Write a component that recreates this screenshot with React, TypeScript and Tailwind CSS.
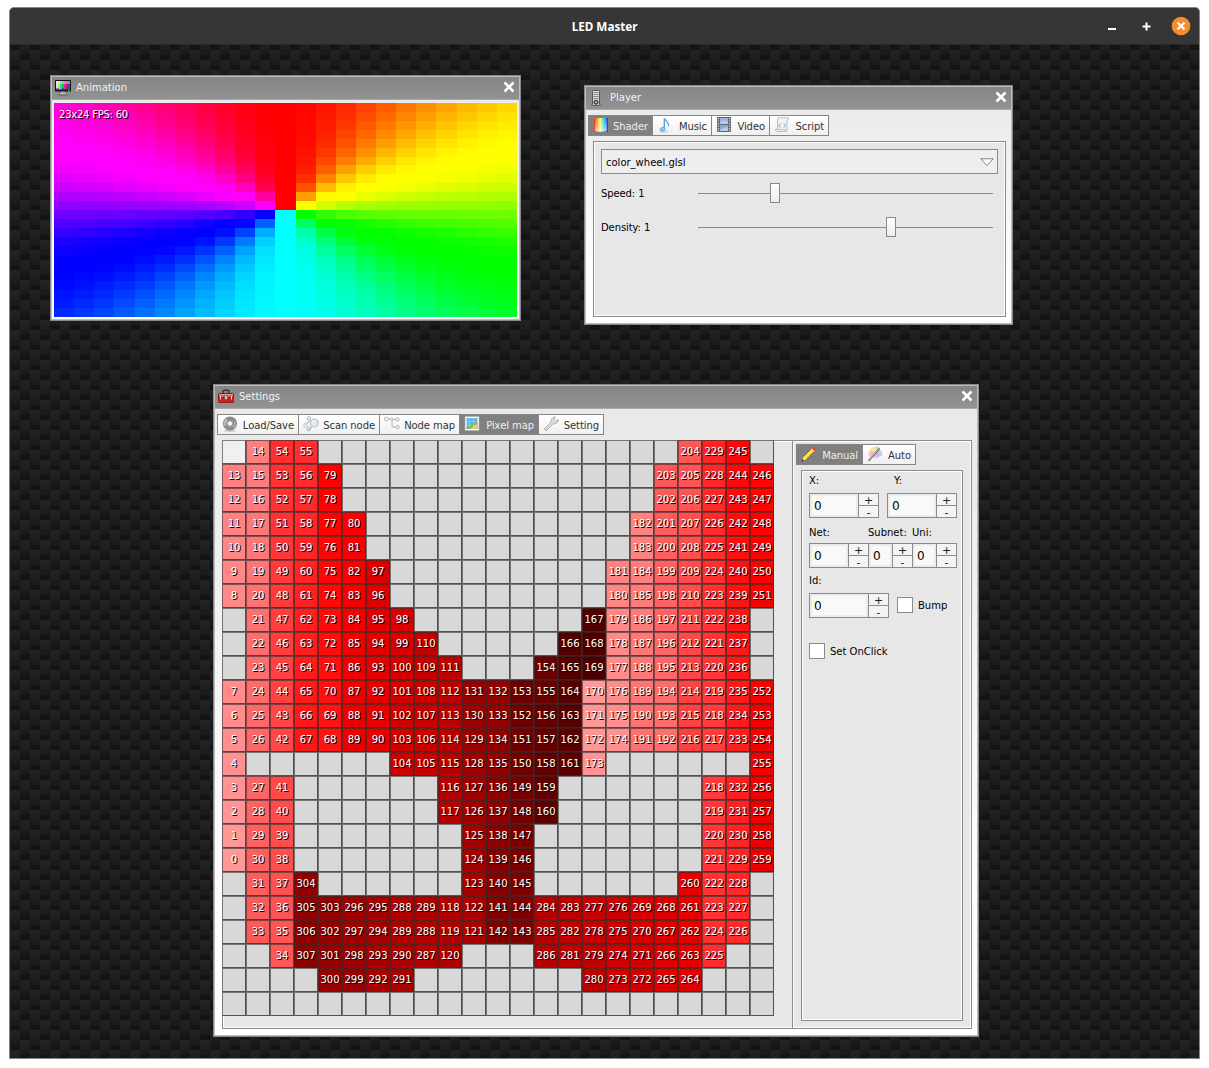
import React from "react";

const FONT = "font-['DejaVu_Sans',sans-serif]";

/* ---------- pixel map data ---------- */
const ROWS = [
  "-,14,54,55,,,,,,,,,,,,,,,,204,229,245,",
  "13,15,53,56,79,,,,,,,,,,,,,,203,205,228,244,246",
  "12,16,52,57,78,,,,,,,,,,,,,,202,206,227,243,247",
  "11,17,51,58,77,80,,,,,,,,,,,,182,201,207,226,242,248",
  "10,18,50,59,76,81,,,,,,,,,,,,183,200,208,225,241,249",
  "9,19,49,60,75,82,97,,,,,,,,,,181,184,199,209,224,240,250",
  "8,20,48,61,74,83,96,,,,,,,,,,180,185,198,210,223,239,251",
  ",21,47,62,73,84,95,98,,,,,,,,167,179,186,197,211,222,238,",
  ",22,46,63,72,85,94,99,110,,,,,,166,168,178,187,196,212,221,237,",
  ",23,45,64,71,86,93,100,109,111,,,,154,165,169,177,188,195,213,220,236,",
  "7,24,44,65,70,87,92,101,108,112,131,132,153,155,164,170,176,189,194,214,219,235,252",
  "6,25,43,66,69,88,91,102,107,113,130,133,152,156,163,171,175,190,193,215,218,234,253",
  "5,26,42,67,68,89,90,103,106,114,129,134,151,157,162,172,174,191,192,216,217,233,254",
  "4,,,,,,,104,105,115,128,135,150,158,161,173,,,,,,,255",
  "3,27,41,,,,,,,116,127,136,149,159,,,,,,,218,232,256",
  "2,28,40,,,,,,,117,126,137,148,160,,,,,,,219,231,257",
  "1,29,39,,,,,,,,125,138,147,,,,,,,,220,230,258",
  "0,30,38,,,,,,,,124,139,146,,,,,,,,221,229,259",
  ",31,37,304,,,,,,,123,140,145,,,,,,,260,222,228,",
  ",32,36,305,303,296,295,288,289,118,122,141,144,284,283,277,276,269,268,261,223,227,",
  ",33,35,306,302,297,294,289,288,119,121,142,143,285,282,278,275,270,267,262,224,226,",
  ",,34,307,301,298,293,290,287,120,,,,286,281,279,274,271,266,263,225,,",
  ",,,,300,299,292,291,,,,,,,,280,273,272,265,264,,,",
  ",,,,,,,,,,,,,,,,,,,,,,",
].map((r) => r.split(","));

const cellColor = (v: string) => {
  if (v === "") return "#d8d8d8";
  if (v === "-") return "#f0f0f0";
  return `hsl(0 100% ${80 - ((Number(v) % 170) * 65) / 169}%)`;
};

/* smooth HSV wheel, 23 x 24 */
const wheelColor = (c: number, r: number) => {
  const x = (c + 0.5) / 23 - 0.5;
  const y = 0.5 - (r + 0.5) / 24;
  const h = ((Math.atan2(x, y) / (2 * Math.PI)) * 6 + 6) % 6;
  const ch = [0, 4, 2].map((o) => {
    const t = Math.min(1, Math.max(0, Math.abs(((h + o) % 6) - 3) - 1));
    return Math.round(255 * t * t * (3 - 2 * t));
  });
  return `rgb(${ch.join(",")})`;
};

/* ---------- icons ---------- */
const Svg = ({ children }: { children: React.ReactNode }) => (
  <svg width="16" height="16" viewBox="0 0 16 16" className="block shrink-0">{children}</svg>
);

const TvIcon = () => (
  <Svg>
    <ellipse cx="8" cy="15" rx="6" ry="1" fill="#666" opacity=".6" />
    <rect x="6" y="10" width="4" height="4" fill="#ccc" />
    <rect x="4.5" y="12.8" width="7" height="1.8" rx=".6" fill="#ddd" stroke="#555" strokeWidth=".6" />
    <rect x="0" y="0" width="16" height="11.500" rx="1" fill="#111" />
    <rect x="1" y="1" width="2.2" height="8.500" fill="#ddd" />
    <rect x="3" y="1" width="2" height="8.500" fill="#e8e020" />
    <rect x="5" y="1" width="2" height="8.500" fill="#18d0d8" />
    <rect x="7" y="1" width="2" height="8.500" fill="#20c828" />
    <rect x="9" y="1" width="2" height="8.500" fill="#e018d8" />
    <rect x="11" y="1" width="2" height="8.500" fill="#d81828" />
    <rect x="13" y="1" width="2" height="8.500" fill="#2848d8" />
    <path d="M1 1h14v3H1z" fill="#fff" opacity=".4" />
    <path d="M1 8.500h3v1H1zM7 8.500h2v1H7z" fill="#2020c0" />
    <rect x="13" y="9.8" width="1.5" height="1.2" fill="#2f4" />
  </Svg>
);
const RemoteIcon = () => (
  <Svg>
    <ellipse cx="7" cy="15" rx="6" ry="1" fill="#666" opacity=".5" />
    <rect x="3.5" y=".5" width="7" height="15" rx=".8" fill="#deded8" stroke="#555" />
    {[2, 4, 6, 8].map((y) =>
      [4.700, 6.500, 8.300].map((x) => <rect key={`${x}-${y}`} x={x} y={y} width="1" height="1" fill={x > 8 && y < 3 ? "#e33" : "#444"} />),
    )}
    <circle cx="7" cy="12.200" r="2.500" fill="#444" />
    <circle cx="7" cy="12.200" r="1" fill="#ccc" />
  </Svg>
);
const ToolboxIcon = () => (
  <Svg>
    <path d="M5 5V2.700Q5 1.200 6.500 1.200h3Q11 1.200 11 2.700V5" fill="none" stroke="#333" strokeWidth="1.500" />
    <rect x=".5" y="4.500" width="15" height="5" rx=".8" fill="#ee5a5a" stroke="#8c1010" />
    <rect x=".5" y="8.500" width="15" height="5" rx=".5" fill="#cc1f1f" stroke="#8c1010" strokeWidth=".8" />
    <path d="M1 5.500h14" stroke="#f89a9a" />
    <path d="M2.500 7v3.500M13.500 7v3.500" stroke="#eee" strokeWidth=".9" />
    <rect x="6.8" y="6.500" width="2.4" height="4" fill="#ddd" stroke="#555" strokeWidth=".7" />
  </Svg>
);
const ShaderIcon = () => (
  <Svg>
    <defs>
      <linearGradient id="rainbow">
        <stop offset="0" stopColor="#f83018" />
        <stop offset=".25" stopColor="#ffa030" />
        <stop offset=".45" stopColor="#f8f880" />
        <stop offset=".62" stopColor="#60e8b0" />
        <stop offset=".8" stopColor="#30a8f8" />
        <stop offset="1" stopColor="#1830e8" />
      </linearGradient>
      <linearGradient id="shine" x1="0" y1="0" x2="0" y2="1">
        <stop offset="0" stopColor="#fff" stopOpacity="0" />
        <stop offset="1" stopColor="#fff" stopOpacity=".55" />
      </linearGradient>
    </defs>
    <rect x="1" y="1" width="14" height="14" rx=".5" fill="url(#rainbow)" />
    <rect x="2" y="2" width="12" height="12" fill="url(#shine)" />
  </Svg>
);
const MusicIcon = () => (
  <Svg>
    <ellipse cx="7" cy="14.500" rx="4.500" ry="1" fill="#bbb" opacity=".6" />
    <path d="M7.300 12V1.200C8.200 4 12 4.500 11.500 9" fill="none" stroke="#5aa6e4" strokeWidth="1.400" />
    <ellipse cx="5.600" cy="12.300" rx="2.500" ry="1.900" fill="#8cc6f2" stroke="#5aa6e4" strokeWidth=".8" transform="rotate(-20 5.600 12.300)" />
  </Svg>
);
const VideoIcon = () => (
  <Svg>
    <rect x="1" y="0" width="14" height="15" fill="#62666c" />
    <rect x="4" y="1" width="8" height="6" fill="#9eb4e0" />
    <rect x="4" y="8" width="8" height="6" fill="#8fa6d8" />
    <path d="M4 6L8 3l4 2v2H4zM4 13l3-2 5-1v4H4z" fill="#b9c9ea" />
    {[1, 3.500, 6, 8.500, 11, 13.200].map((y) => (
      <g key={y} fill="#d8dade">
        <rect x="1.800" y={y} width="1.300" height="1.200" />
        <rect x="12.900" y={y} width="1.300" height="1.200" />
      </g>
    ))}
  </Svg>
);
const ScriptIcon = () => (
  <Svg>
    <path d="M4 .7h10.200q1 2.500-1.200 2.500V14.500H2.500q-2-1-.5-2.500H3.500V3z" fill="#edf2f2" stroke="#b3c2c2" />
    <path d="M3 12.500h8v2" fill="none" stroke="#b3c2c2" />
    <path d="M6.500 6.500L4.800 8.500l1.700 2M9.800 6.500l1.700 2-1.700 2" fill="none" stroke="#8b9898" />
  </Svg>
);
const DiscIcon = () => (
  <Svg>
    <ellipse cx="8" cy="14.700" rx="6" ry="1" fill="#999" opacity=".5" />
    <circle cx="8" cy="7.500" r="5.100" fill="none" stroke="#8a8a8a" strokeWidth="4" />
    <path d="M3.500 9.500A5 5 0 0 1 5 3.500" fill="none" stroke="#bababa" strokeWidth="2.500" />
    <path d="M12.500 5.500A5 5 0 0 1 11 11.500" fill="none" stroke="#a8a8a8" strokeWidth="2" />
    <circle cx="8" cy="7.500" r="2.700" fill="#f4f4f4" stroke="#666" strokeWidth=".7" />
  </Svg>
);
const ScanIcon = () => (
  <Svg>
    <path d="M6 3v3L3 7.500M2.500 10v1" stroke="#b8b8b8" strokeWidth="1.200" fill="none" />
    <g fill="#f4f4f4" stroke="#b8b8b8">
      <circle cx="6" cy="2.200" r="1.700" />
      <circle cx="2.400" cy="9.500" r="1.700" />
      <circle cx="5.500" cy="13" r="1.700" />
    </g>
    <path d="M8.500 11L5 14.800" stroke="#bbb" strokeWidth="1.800" />
    <circle cx="11.300" cy="7" r="4" fill="#dbe8f6" stroke="#c0c4c8" strokeWidth="1.200" />
    <path d="M9 6q1-2 3.500-1" stroke="#fff" fill="none" />
  </Svg>
);
const NodeIcon = () => (
  <Svg>
    <path d="M3 3h5v8h4M8 3.500h4" stroke="#b4b4b4" fill="none" />
    <g fill="#f6f6f6" stroke="#b4b4b4">
      <circle cx="2.400" cy="3" r="1.900" />
      <circle cx="7.500" cy="3.500" r="1.400" />
      <circle cx="13.500" cy="3.500" r="1.700" />
      <circle cx="13.500" cy="11" r="1.700" />
    </g>
  </Svg>
);
const PixelIcon = () => (
  <Svg>
    <rect x="1" y=".5" width="14" height="14" fill="#fff" stroke="#aaa" strokeWidth=".6" />
    <rect x="2.500" y="2" width="11" height="11" fill="#5cb8ea" />
    <path d="M2.500 11.500Q6 10 7.500 8L13.500 5.500V13h-11z" fill="#8fae5c" />
    <path d="M6 13L13.500 7.500V13z" fill="#d8cc78" />
    <path d="M5.500 2v11M9.500 2v11M2.500 5.500h11M2.500 9.500h11" stroke="#fff" strokeWidth=".6" opacity=".35" />
  </Svg>
);
const WrenchIcon = () => (
  <Svg>
    <path d="M1.200 12.800L8.200 6C7.600 3.500 9.500 .8 12.500 1L10.800 3.200 12.800 5.200 15.200 3.500C15.500 6.500 12.800 8.500 10 7.800L3 15z" fill="#dcdcdc" stroke="#a2a2a2" strokeWidth=".8" />
  </Svg>
);
const PencilIcon = () => (
  <Svg>
    <path d="M1 15l1.500-4.500L11 2l3 3-8.500 8.500z" fill="#f3d240" stroke="#7b5c12" strokeWidth=".8" />
    <path d="M3.500 11.500L12 3" stroke="#fdf0a0" />
    <path d="M1 15l1.500-4.500 3 3z" fill="#f2dcb0" />
    <path d="M.8 15.200l.8-2.200 1.400 1.400z" fill="#222" />
    <path d="M11 2l1.300-1.200q1-.6 2 .3 1.200 1.200.5 2.200L14 5z" fill="#e84848" />
    <path d="M10.500 2.500l3 3" stroke="#ccc" />
  </Svg>
);
const WandIcon = () => (
  <Svg>
    <circle cx="10" cy="3.500" r="3" fill="#9fe49c" opacity=".7" />
    <circle cx="12" cy="7.500" r="3.200" fill="#a9b8f6" opacity=".7" />
    <circle cx="6" cy="4" r="3" fill="#f6e193" opacity=".8" />
    <circle cx="4.500" cy="8" r="3" fill="#f7a8bd" opacity=".7" />
    <circle cx="9" cy="9.500" r="3" fill="#e0a4f0" opacity=".6" />
    <path d="M1.500 14.800L12.500 2.500" stroke="#777" strokeWidth="2" />
    <path d="M1.500 14.300L11.500 3" stroke="#ddd" strokeWidth=".7" />
  </Svg>
);

const CloseX = () => (
  <svg width="12" height="12" viewBox="0 0 12 12" className="-mt-[3px] block">
    <path d="M1.500 1.500l9 9M10.500 1.500l-9 9" stroke="#fff" strokeWidth="2.500" />
  </svg>
);

/* ---------- widgets ---------- */
function Window({ title, icon, className, children }: { title: string; icon: React.ReactNode; className: string; children: React.ReactNode }) {
  return (
    <section className={`absolute flex flex-col border border-[#898989] ${className}`}>
      <div className="flex h-full flex-col border border-[#bdbdbd] bg-gradient-to-b from-[#e8e8e8] to-white to-80%">
        <header className="flex h-[23px] shrink-0 items-center border-b border-[#a8a8a8] bg-gradient-to-b from-[#868686] to-[#929292] pr-[4px] pl-[3px]">
          {icon}
          <h2 className="ml-[5px] flex-1 pb-px text-[10px] leading-none text-[#f2f2f2]">{title}</h2>
          <CloseX />
        </header>
        {children}
      </div>
    </section>
  );
}

type TabDef = { label: string; icon: React.ReactNode; w: string; active?: boolean };
function Tabs({ tabs }: { tabs: TabDef[] }) {
  return (
    <div className="flex h-[21px] shrink-0 self-start border border-[#858585]">
      {tabs.map((t, i) => (
        <div
          key={t.label}
          className={`flex items-center justify-between pr-[4px] pl-[4px] ${t.w} ${i ? "border-l border-[#858585]" : ""} ${
            t.active ? "bg-[#808080] text-[#eee]" : "bg-gradient-to-b from-white to-[#f0f0f0] text-[#333]"
          }`}
        >
          <span className="-mt-[2px]">{t.icon}</span>
          <span className="mt-[3px] text-[10px] leading-none tracking-[-0.08px] whitespace-nowrap">{t.label}</span>
        </div>
      ))}
    </div>
  );
}

function Slider({ label, thumb }: { label: string; thumb: string }) {
  return (
    <div className="flex h-5 items-center">
      <span className="w-[97px] pt-[2px] text-[10px] leading-none tracking-[-0.1px]">{label}</span>
      <div className="relative flex h-5 w-[295px] items-center">
        <div className="h-px w-full bg-[#8a8a8a]" />
        <div className={`absolute top-0 h-5 w-[10px] border border-[#8a8a8a] bg-gradient-to-b from-white to-[#ececec] ${thumb}`} />
      </div>
    </div>
  );
}

function Spin({ w }: { w: string }) {
  return (
    <div className={`flex h-[25px] border border-[#8a8a8a] ${w}`}>
      <div className="flex flex-1 items-center border-2 border-[#ebebeb] bg-[#f9f9f9] pt-px pl-[2px] text-[12px] leading-none">0</div>
      <div className="flex w-[20px] flex-col border-l border-[#8a8a8a] bg-[#f4f4f4] text-center text-[11px] leading-[14px] text-[#222]">
        <span className="h-[12px] border-b border-[#8a8a8a]">+</span>
        <span className="h-[11px]">-</span>
      </div>
    </div>
  );
}

const Check = ({ label, gap }: { label: string; gap: string }) => (
  <div className={`flex items-center ${gap}`}>
    <span className="h-4 w-4 border border-[#8a8a8a] bg-white" />
    <span className="pt-px text-[10px] leading-none">{label}</span>
  </div>
);

export default function App() {
  return (
    <div className={`h-[1068px] w-[1209px] bg-white pt-[7px] pl-[9px] ${FONT} text-black`}>
      <main className="flex h-[1052px] w-[1191px] flex-col overflow-hidden rounded-t-[5px] border border-[#858585] bg-[#1b1b1b]">
        <div className="flex h-[37px] shrink-0 items-center border-b border-[#282828] bg-[#363636] text-white">
          <span className="w-[130px]" />
          <h1 className="flex-1 text-center font-['Noto_Sans',sans-serif] text-[13px] leading-none font-bold">
            <span className="inline-block scale-x-[0.9] whitespace-nowrap">LED Master</span>
          </h1>
          <div className="flex w-[130px] items-center justify-end pr-[8px]">
            <svg width="8" height="10" className="mr-[26px]"><path d="M0 8h8" stroke="#fff" strokeWidth="2" /></svg>
            <svg width="9" height="9" className="mr-[20px]"><path d="M.5 4.500h8M4.500 .5v8" stroke="#fff" strokeWidth="2" /></svg>
            <svg width="20" height="20" viewBox="0 0 20 20">
              <circle cx="10" cy="10" r="9.300" fill="#f48e2b" />
              <path d="M6.500 6.500l7 7M13.500 6.500l-7 7" stroke="#fff" strokeWidth="2.200" />
            </svg>
          </div>
        </div>

        <div className="relative flex-1 [background:conic-gradient(from_270deg_at_10px_5px,#222222_90deg,transparent_0)_0_5px/20px_20px,conic-gradient(from_270deg_at_10px_5px,#1f1f1f_90deg,transparent_0)_0_10px/20px_20px,conic-gradient(from_270deg_at_10px_5px,#141414_90deg,transparent_0)_0_0/20px_20px,conic-gradient(from_270deg_at_10px_5px,#222222_90deg,transparent_0)_10px_15px/20px_20px,conic-gradient(from_270deg_at_10px_5px,#1f1f1f_90deg,transparent_0)_10px_0/20px_20px,conic-gradient(from_270deg_at_10px_5px,#141414_90deg,transparent_0)_10px_10px/20px_20px,#1b1b1b]">
          <Window title="Animation" icon={<TvIcon />} className="top-[30px] left-[40px] h-[246px] w-[471px]">
            <div className="relative mt-[3px] ml-[2px] grid h-[214px] w-[463px] grid-cols-[repeat(23,minmax(0,1fr))] grid-rows-[repeat(24,minmax(0,1fr))]">
              {Array.from({ length: 552 }, (_, i) => (
                <i key={i} style={{ background: wheelColor(i % 23, Math.floor(i / 23)) }} />
              ))}
              <span className="absolute top-[7px] left-[5px] text-[10px] leading-none tracking-[-0.23px] text-white [text-shadow:1px_1px_0_#000]">23x24 FPS: 60</span>
            </div>
          </Window>

          <Window title="Player" icon={<RemoteIcon />} className="top-[40px] left-[574px] h-[240px] w-[429px]">
            <div className="mt-[5px] ml-[2px] flex">
              <Tabs
                tabs={[
                  { label: "Shader", icon: <ShaderIcon />, w: "w-[63px]", active: true },
                  { label: "Music", icon: <MusicIcon />, w: "w-[59px]" },
                  { label: "Video", icon: <VideoIcon />, w: "w-[58px]" },
                  { label: "Script", icon: <ScriptIcon />, w: "w-[59px]" },
                ]}
              />
            </div>
            <div className="mt-[5px] ml-[7px] h-[176px] w-[413px] border border-[#8a8a8a]">
              <div className="h-full border border-white bg-[#e7e7e7] pt-[6px] pl-[6px]">
                <div className="mb-[9px] flex h-[25px] w-[397px] items-center justify-between border border-[#8a8a8a] bg-[#eee] pr-[3px] pl-[4px] text-[10px] leading-none">
                  <span className="pt-[3px]">color_wheel.glsl</span>
                  <svg width="14" height="9" viewBox="0 0 14 9" className="mt-px"><path d="M.8 .8h12.400L7 7.500z" fill="#fff" stroke="#808080" /></svg>
                </div>
                <Slider label="Speed: 1" thumb="left-[72px]" />
                <div className="h-[14px]" />
                <Slider label="Density: 1" thumb="left-[188px]" />
              </div>
            </div>
          </Window>

          <Window title="Settings" icon={<ToolboxIcon />} className="top-[339px] left-[203px] h-[653px] w-[766px]">
            <div className="mt-[5px] ml-[2px] flex">
              <Tabs
                tabs={[
                  { label: "Load/Save", icon: <DiscIcon />, w: "w-[80px]" },
                  { label: "Scan node", icon: <ScanIcon />, w: "w-[81px]" },
                  { label: "Node map", icon: <NodeIcon />, w: "w-[80px]" },
                  { label: "Pixel map", icon: <PixelIcon />, w: "w-[79px]", active: true },
                  { label: "Setting", icon: <WrenchIcon />, w: "w-[65px]" },
                ]}
              />
            </div>
            <div className="mt-[5px] ml-[7px] flex h-[589px] w-[750px] bg-[#e7e7e7] shadow-[inset_0_0_0_1px_#8a8a8a,inset_0_0_0_2px_#fff]">
              <div className="grid h-[576px] w-[552px] grid-cols-[repeat(23,24px)] grid-rows-[repeat(24,24px)]">
                {ROWS.flatMap((row, r) =>
                  row.map((v, c) => (
                    <div
                      key={`${r}-${c}`}
                      className="flex items-center justify-center border border-t-[#303030]/60 border-r-[#303030]/80 border-b-[#303030]/80 border-l-[#303030]/60 text-[10px] leading-none text-white [text-shadow:1px_1px_0_#000]"
                      style={{ backgroundColor: cellColor(v) }}
                    >
                      {v === "-" ? "" : v}
                    </div>
                  )),
                )}
              </div>
              <div className="ml-[18px] flex h-full w-[180px] flex-col border border-[#8a8a8a] pt-[3px] pl-[3px] shadow-[inset_1px_1px_0_#fff]">
                <Tabs
                  tabs={[
                    { label: "Manual", icon: <PencilIcon />, w: "w-[65px]", active: true },
                    { label: "Auto", icon: <WandIcon />, w: "w-[53px]" },
                  ]}
                />
                <div className="mt-[5px] ml-[5px] h-[551px] w-[162px] border border-[#8a8a8a] pt-[5px] pl-[7px] text-[10px] leading-none shadow-[inset_0_0_0_1px_#fff]">
                  <div className="flex h-[17px]">
                    <span className="w-[85px]">X:</span>
                    <span>Y:</span>
                  </div>
                  <div className="flex gap-[8px]">
                    <Spin w="w-[70px]" />
                    <Spin w="w-[70px]" />
                  </div>
                  <div className="mt-[10px] flex h-[15px]">
                    <span className="w-[59px]">Net:</span>
                    <span className="w-[44px]">Subnet:</span>
                    <span>Uni:</span>
                  </div>
                  <div className="flex">
                    <Spin w="w-[60px]" />
                    <Spin w="-ml-px w-[45px]" />
                    <Spin w="-ml-px w-[45px]" />
                  </div>
                  <div className="mt-[8px] h-[17px]">Id:</div>
                  <div className="flex h-[25px] items-center gap-[8px]">
                    <Spin w="w-[80px]" />
                    <div className="-mt-px">
                      <Check label="Bump" gap="gap-[5px]" />
                    </div>
                  </div>
                  <div className="mt-[25px]">
                    <Check label="Set OnClick" gap="gap-[5px]" />
                  </div>
                </div>
              </div>
            </div>
          </Window>
        </div>
      </main>
    </div>
  );
}
